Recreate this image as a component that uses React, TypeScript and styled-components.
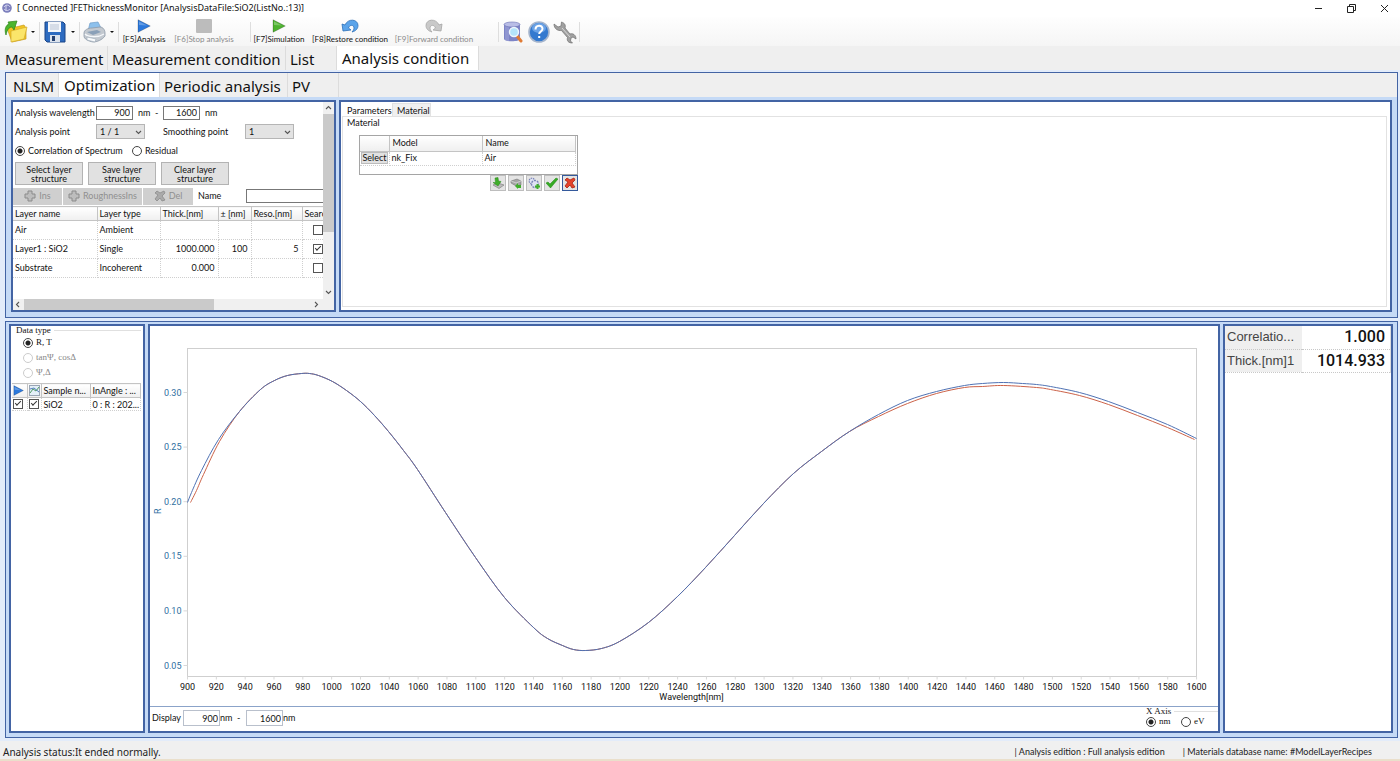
import React from 'react';
import styled, { createGlobalStyle, css } from 'styled-components';

const gothic = '"Lato", "Noto Sans CJK JP", sans-serif';
const wideGothic = '"Noto Sans", "Noto Sans CJK JP", sans-serif';
const mincho = '"Liberation Serif", "Noto Sans CJK JP", serif';
const chartFont = '"Roboto", sans-serif';

const edge = '#4364a4';
const band = '#c5daf6';

const GlobalStyle = createGlobalStyle`
  *, *::before, *::after { box-sizing: border-box; }
  body { margin: 0; background: #e3ecfa; color: #111; font: 9px/12px ${gothic}; }
  button, input, select { font: inherit; color: inherit; margin: 0; border-radius: 0; }
  table { border-collapse: collapse; table-layout: fixed; }
  fieldset { border: 0; margin: 0; padding: 0; min-width: 0; }
  legend { padding: 0; }
`;

const Window = styled.div`
  display: flex;
  flex-direction: column;
  min-height: 100vh;
`;

/* Title bar */
const TitleBar = styled.header`
  display: flex;
  align-items: center;
  height: 17px;
  padding: 0 10px 1px 2px;
  background: #fff;
`;
const Title = styled.h1`
  margin: 0 auto 0 5px;
  font: 400 9px/16px "Noto Sans", sans-serif;
  color: #111;
`;
const WindowButtons = styled.div`
  display: flex;
  gap: 22px;
`;
const WindowButton = styled.button`
  display: flex;
  width: 11px;
  height: 11px;
  padding: 0;
  border: 0;
  background: none;
`;

/* Tool bar */
const ToolBar = styled.div`
  display: flex;
  align-items: center;
  height: 29px;
  padding-left: 4px;
  background: linear-gradient(#fefefe, #f5f5f5);
`;
const IconButton = styled.button`
  display: flex;
  align-items: center;
  justify-content: center;
  width: 26px;
  height: 26px;
  padding: 0;
  border: 0;
  background: none;
`;
const DropButton = styled.button`
  display: flex;
  align-items: center;
  width: 35px;
  height: 26px;
  padding: 0;
  border: 0;
  background: none;
  svg { flex: none; }
`;
const Caret = styled.span`
  flex: none;
  margin: 0 4px 0 auto;
  border: 2px solid transparent;
  border-top-color: #111;
  border-bottom: 0;
`;
const Divider = styled.span<{ $before?: number; $after?: number }>`
  width: 1px;
  height: 20px;
  margin: 0 ${p => p.$after ?? 0}px 0 ${p => p.$before ?? 0}px;
  background: #dedede;
`;
const ActionButton = styled.button<{ $width: number }>`
  display: flex;
  flex-direction: column;
  align-items: center;
  gap: 1px;
  width: ${p => p.$width}px;
  height: 27px;
  padding: 1px 0 0;
  border: 0;
  background: none;
  white-space: nowrap;
  font: 8px/10px ${gothic};
  color: #111;
  &:disabled { color: #8a8a8a; }
`;

/* Tabs */
const TabRow = styled.nav<{ $inset?: boolean }>`
  display: flex;
  height: 24px;
  padding-left: ${p => (p.$inset ? 3 : 1)}px;
  background: #efefef;
`;
const Tab = styled.button<{ $width: number }>`
  width: ${p => p.$width}px;
  padding: 1px 0 0 4px;
  border: 0;
  border-right: 1px solid #dcdcdc;
  background: #efefef;
  text-align: left;
  white-space: nowrap;
  font: 15px/20px ${wideGothic};
  &[aria-selected='true'] {
    padding: 0 0 1px 5px;
    background: #fff;
  }
`;

/* Frames */
const UpperFrame = styled.section`
  margin: 2px 2px 3px 5px;
  border: 1px solid ${edge};
`;
const UpperBody = styled.div`
  display: flex;
  gap: 3px;
  padding: 3px 5px 5px;
  background: ${band};
`;
const LowerFrame = styled.section`
  display: flex;
  flex: 1;
  gap: 3px;
  margin: 0 2px 3px 5px;
  padding: 2px 4px 4px 3px;
  border: 1px solid ${edge};
  background: ${band};
`;
const panel = css`
  border: 2px solid ${edge};
  background: #fff;
`;

/* Layer editor */
const LayerPanel = styled.section`
  ${panel}
  display: grid;
  grid-template-columns: 1fr 11px;
  grid-template-rows: 1fr 11px;
  width: 325px;
  height: 212px;
`;
const LayerContent = styled.div`
  min-width: 0;
  overflow: hidden;
  background: #fff;
`;
const Fields = styled.div`
  display: flex;
  flex-direction: column;
  padding: 1px 0 2px 2px;
`;
const FieldRow = styled.div`
  display: flex;
  align-items: center;
  height: 19px;
`;
const FieldLabel = styled.label<{ $width: number }>`
  width: ${p => p.$width}px;
  white-space: nowrap;
`;
const NumberInput = styled.input`
  width: 37px;
  height: 14px;
  padding: 0 2px;
  border: 1px solid #777;
  background: #fff;
  text-align: right;
`;
const Unit = styled.span<{ $width?: number }>`
  width: ${p => (p.$width ? `${p.$width}px` : 'auto')};
  padding-left: 5px;
  white-space: pre;
`;
const SelectWrap = styled.span<{ $after?: number }>`
  position: relative;
  display: flex;
  width: 49px;
  margin-right: ${p => p.$after ?? 0}px;
  svg { position: absolute; right: 3px; top: 5px; pointer-events: none; }
`;
const Select = styled.select`
  appearance: none;
  width: 100%;
  height: 15px;
  padding: 0 3px;
  border: 1px solid #b5b5b5;
  background: #e3e3e3;
`;
const Choice = styled.label<{ $width?: number; $muted?: boolean }>`
  display: flex;
  align-items: center;
  gap: 3px;
  width: ${p => (p.$width ? `${p.$width}px` : 'auto')};
  white-space: nowrap;
  color: ${p => (p.$muted ? '#888' : 'inherit')};
`;
const Radio = styled.input`
  appearance: none;
  flex: none;
  width: 10px;
  height: 10px;
  border: 1px solid #444;
  border-radius: 50%;
  background: #fff;
  &:checked { background: radial-gradient(circle, #222 0 2px, #fff 3px); }
  &:disabled { border-color: #ccc; }
`;
const Check = styled.input`
  appearance: none;
  display: block;
  flex: none;
  width: 10px;
  height: 10px;
  border: 1px solid #555;
  background: #fff;
  &:checked::after {
    content: '';
    display: block;
    width: 6px;
    height: 3px;
    margin: 1px;
    border: solid #333;
    border-width: 0 0 1px 1px;
    transform: rotate(-45deg);
  }
`;
const StructureButtons = styled.div`
  display: flex;
  gap: 5px;
  padding-top: 2px;
`;
const StructureButton = styled.button`
  width: 68px;
  height: 23px;
  padding: 0;
  border: 1px solid #b3b3b3;
  background: #e1e1e1;
  line-height: 9px;
`;
const EditRow = styled.div`
  display: flex;
  align-items: center;
  gap: 1px;
  height: 19px;
  padding-bottom: 1px;
`;
const EditButton = styled.button<{ $width: number }>`
  display: flex;
  flex: none;
  align-items: center;
  justify-content: center;
  gap: 3px;
  width: ${p => p.$width}px;
  height: 17px;
  padding: 0;
  border: 0;
  background: #cfcfcf;
  &:disabled { color: #8f8f8f; }
`;
const NameLabel = styled.label`
  flex: none;
  width: 51px;
  padding-left: 4px;
`;
const NameInput = styled.input`
  flex: none;
  width: 110px;
  height: 14px;
  border: 1px solid #777;
`;

const cells = css`
  th, td {
    padding: 0 2px;
    font-weight: 400;
    text-align: left;
    white-space: nowrap;
    overflow: hidden;
  }
  th {
    border: solid #c4c4c4;
    border-width: 1px 1px 1px 0;
    background: linear-gradient(#fff, #efefef);
  }
  td {
    border: dotted #cfcfcf;
    border-width: 0 1px 1px 0;
  }
  svg { display: block; }
`;
const LayerTable = styled.table`
  ${cells}
  width: 340px;
  th { height: 14px; padding-left: 2px; }
  td { height: 19px; padding-left: 2px; }
  td:nth-child(n + 3) { text-align: right; padding-right: 3px; }
  td:last-child { padding-left: 10px; }
`;

const VScroll = styled.div`
  display: flex;
  flex-direction: column;
  align-items: center;
  justify-content: space-between;
  padding: 2px 0 3px;
  background: #f0f0f0;
`;
const VThumb = styled.div`
  width: 11px;
  height: 118px;
  margin: 3px 0 auto;
  background: #cacaca;
`;
const HScroll = styled.div`
  display: flex;
  grid-column: 1 / 3;
  align-items: center;
  padding: 0 14px 0 1px;
  background: #f0f0f0;
`;
const HThumb = styled.div`
  width: 190px;
  height: 11px;
  margin: 0 auto 0 3px;
  background: #cacaca;
`;

/* Material editor */
const MaterialPanel = styled.section`
  ${panel}
  flex: 1;
  min-width: 0;
  padding: 1px 3px 3px 1px;
  display: flex;
  flex-direction: column;
`;
const SmallTabs = styled.div`
  display: flex;
  height: 13px;
`;
const SmallTab = styled.button<{ $width: number }>`
  width: ${p => p.$width}px;
  padding: 0 0 0 4px;
  border: 1px solid #e2e2e2;
  border-bottom: 0;
  background: #f0f0f0;
  text-align: left;
  line-height: 11px;
  &[aria-selected='true'] { background: #fff; border-color: #fff; }
`;
const MaterialBody = styled.div`
  flex: 1;
  padding: 0 0 0 4px;
  border: 1px solid #e2e2e2;
`;
const MaterialGrid = styled.div`
  width: 219px;
  height: 40px;
  margin: 6px 0 0 12px;
  border: 1px solid #a5a5a5;
`;
const MaterialTable = styled.table`
  ${cells}
  width: 216px;
  th { height: 15px; padding-left: 3px; border-top: 0; }
  td { height: 14px; }
  td:first-child { padding: 0 1px; }
`;
const SelectButton = styled.button`
  display: block;
  width: 27px;
  height: 12px;
  padding: 0;
  border: 1px solid #bbb;
  background: #e1e1e1;
  line-height: 10px;
`;
const MaterialActions = styled.div`
  display: flex;
  justify-content: flex-end;
  gap: 2px;
  width: 231px;
`;
const SmallButton = styled.button<{ $focus?: boolean }>`
  display: flex;
  width: 16px;
  height: 16px;
  padding: 1px;
  border: 1px solid ${p => (p.$focus ? '#34599c' : '#bdbdbd')};
  background: #e4e4e4;
`;

/* Data selection */
const DataPanel = styled.section`
  ${panel}
  width: 136px;
  padding: 0 2px 2px 1px;
`;
const Group = styled.fieldset`
  font: 9px/11px ${mincho};
`;
const GroupTitle = styled.legend`
  display: flex;
  align-items: center;
  width: 100%;
  height: 8px;
  padding-left: 4px;
  gap: 3px;
  &::after { content: ''; flex: 1; height: 1px; background: #e0e0e0; }
`;
const RadioList = styled.div`
  display: flex;
  flex-direction: column;
  gap: 4px;
  padding: 3px 0 5px 11px;
`;
const SampleTable = styled.table`
  ${cells}
  width: 129px;
  th { height: 14px; }
  td { height: 13px; line-height: 11px; }
  th:nth-child(-n + 2), td:nth-child(-n + 2) { padding: 0 1px; }
`;

/* Spectrum */
const SpectrumPanel = styled.section`
  ${panel}
  display: flex;
  flex: 1;
  flex-direction: column;
  min-width: 0;
`;
const Plot = styled.svg`
  display: block;
  width: 100%;
  height: auto;
  text { font: 9px ${chartFont}; fill: #111; text-anchor: middle; }
  .value { fill: #2f6f9f; text-anchor: end; }
`;
const PlotFooter = styled.div`
  display: flex;
  flex: 1;
  align-items: flex-start;
  min-height: 25px;
  border-top: 1px solid #8ba3c9;
`;
const DisplayRange = styled.div`
  display: flex;
  align-items: center;
  margin-right: auto;
  padding: 3px 0 0 2px;
`;
const RangeInput = styled.input`
  width: 37px;
  height: 16px;
  padding: 0 1px;
  border: 1px solid #b9c0cc;
  text-align: right;
`;
const AxisGroup = styled(Group)`
  width: 72px;
  legend { padding-left: 0; }
`;
const AxisChoices = styled.div`
  display: flex;
  padding-top: 1px;
`;

/* Results */
const ResultPanel = styled.section`
  ${panel}
  width: 170px;
`;
const ResultTable = styled.table`
  width: 166px;
  font-family: "Liberation Sans", sans-serif;
  th, td { height: 23px; border-bottom: 1px dotted #c8c8c8; white-space: nowrap; }
  th { width: 77px; padding: 0 0 0 2px; background: #efefef; text-align: left; font-weight: 400; font-size: 13px; color: #444; }
  td { padding: 0 5px 0 3px; text-align: right; font: 500 16px/20px Roboto, sans-serif; border-right: 1px solid #ddd; }
`;

/* Status bar */
const StatusBar = styled.footer`
  display: flex;
  align-items: center;
  height: 20px;
  padding: 3px 28px 0 3px;
  border-bottom: 2px solid #eadfcb;
  background: #f0f0f0;
  color: #222;
`;
const StatusText = styled.span`
  margin-right: auto;
  font: 10px/16px "Noto Sans", sans-serif;
`;
const StatusItem = styled.span`
  margin-left: 18px;
`;

const Chevron = ({ d }: { d: string }) => (
  <svg width="7" height="7" viewBox="0 0 7 7" fill="none" stroke="#555" strokeWidth="1.1">
    <path d={d} />
  </svg>
);
const DOWN = 'M1 2l2.5 2.5L6 2';

const AppIcon = () => (
  <svg width="10" height="12" viewBox="0 0 10 12">
    <circle cx="5" cy="6" r="4.8" fill="#7d80bd" />
    <path d="M2 5c2-3 5-2 6 0M2 7c2 2 4 2 6 0M4 3v6" stroke="#d5d5f0" fill="none" />
  </svg>
);
const FolderIcon = () => (
  <svg width="25" height="24" viewBox="0 0 25 24">
    <path d="M3 8l7-3 2 2 8-2 2 3v11L8 22z" fill="#f2c522" stroke="#c59a1c" strokeWidth=".7" />
    <path d="M7 11l16-4-3 12L7 22z" fill="#fbe56a" stroke="#d6ab26" strokeWidth=".7" />
    <path d="M2 15C0 9 2 5 5 4L4 2l9-1-3 9-2-3c-3 0-5 3-6 8z" fill="#4cb52e" stroke="#2c8418" strokeWidth=".7" />
  </svg>
);
const SaveIcon = () => (
  <svg width="22" height="22" viewBox="0 0 22 22">
    <path d="M1 1h18l2 2v18H3l-2-2z" fill="#2d6bc0" stroke="#1b4586" />
    <path d="M4 1h13v10H4z" fill="#f4f6fa" />
    <path d="M6 4h9M6 6h9M6 8h9" stroke="#b8c3d5" />
    <path d="M6 14h10v7H6z" fill="#dbe2ec" />
    <path d="M8 15h3v5H8z" fill="#25406f" />
  </svg>
);
const PrinterIcon = () => (
  <svg width="23" height="22" viewBox="0 0 23 22">
    <path d="M5 10l2-8 8-1 4 8z" fill="#8cc0ec" stroke="#6f9cc8" strokeWidth=".7" />
    <path d="M1 12c0-3 4-5 8-5l8-1c3 0 5 3 5 6v3c-3 4-8 6-12 6-5-1-9-3-9-6z" fill="#c3c9d0" stroke="#8d99a8" strokeWidth=".8" />
    <path d="M4 11l10-2 4 2-8 3z" fill="#8aa0b8" />
    <path d="M2 13c3 3 13 4 19 0" fill="none" stroke="#f5f8fb" strokeWidth="1.4" />
    <path d="M4 16l9 2-1 3-8-2z" fill="#f8fafc" stroke="#9aa7b5" strokeWidth=".6" />
  </svg>
);
const PlayIcon = ({ fill, size = 14 }: { fill: string; size?: number }) => (
  <svg width={size} height={size} viewBox="0 0 14 14">
    <path d="M1 .7L13.3 7 1 13.3z" fill={fill} stroke="#0003" />
    <path d="M2 2.5L10 6.6 2 6z" fill="#fff4" />
  </svg>
);
const StopIcon = () => (
  <svg width="16" height="14" viewBox="0 0 16 14">
    <rect width="16" height="14" rx="1" fill="#bcbcbc" />
  </svg>
);
const TurnIcon = ({ fill, line, flip }: { fill: string; line: string; flip?: boolean }) => (
  <svg width="18" height="14" viewBox="0 0 18 14">
    <path
      transform={flip ? 'translate(18 0) scale(-1 1)' : undefined}
      d="M1 5l1 7 8-1-2.500-2C9 5 13 6 13 9c0 1-.5 2.500-2 4 4-1 6-3.500 6-6.500C17 0 7-1 4 6z"
      fill={fill}
      stroke={line}
      strokeWidth=".8"
    />
  </svg>
);
const DatabaseIcon = () => (
  <svg width="20" height="22" viewBox="0 0 20 22">
    <path d="M1 3v15c0 3 16 3 16 0V3z" fill="#7d84c6" />
    <path d="M3 5v14M5 5v15" stroke="#a3a8dc" />
    <ellipse cx="9" cy="3.500" rx="8" ry="2.500" fill="#b9bde6" stroke="#6a70b4" strokeWidth=".6" />
    <path d="M14 15l4 5" stroke="#e07b34" strokeWidth="3" strokeLinecap="round" />
    <circle cx="11" cy="11" r="4.500" fill="#b4e4fa" stroke="#eef6fd" strokeWidth="1.4" />
  </svg>
);
const HelpIcon = () => (
  <svg width="22" height="22" viewBox="0 0 22 22">
    <circle cx="11" cy="11" r="10" fill="#3479cf" stroke="#a4b4cc" strokeWidth="1.6" />
    <ellipse cx="11" cy="7" rx="7" ry="5" fill="#6aa2e6" />
    <path d="M7.500 8.500c0-5 7-5 7-.7 0 2.700-3.300 2.700-3.300 5.200M11.200 15v2" fill="none" stroke="#fff" strokeWidth="2" />
  </svg>
);
const WrenchIcon = () => (
  <svg width="24" height="24" viewBox="0 0 24 24">
    <path
      d="M1 4l4 3 3-1 .5-4c3 1 4.500 3 3.500 6l5 6c3-1 6 1 6 5l-3-2-2 1-.5 3 2 2c-4 0-6-2-5-5.500l-6-7C5 11 1 9 1 4z"
      fill="#a0a0a0"
      stroke="#6f6f6f"
      strokeWidth=".7"
    />
    <path d="M9 8l8 9" stroke="#d8d8d8" />
  </svg>
);
const PlusIcon = () => (
  <svg width="12" height="12" viewBox="0 0 12 12">
    <path d="M4 1h4v3h3v4H8v3H4V8H1V4h3z" fill="#bdbdbd" stroke="#8b8b8b" />
  </svg>
);
const DeleteIcon = ({ fill, line }: { fill: string; line: string }) => (
  <svg width="12" height="12" viewBox="0 0 12 12">
    <path d="M1 3l2-2 3 2 4-2 1 2-3 3 3 4-3 1-2-3-3 3-2-2 3-4z" fill={fill} stroke={line} strokeWidth=".8" />
  </svg>
);
const ImportIcon = () => (
  <svg width="12" height="12" viewBox="0 0 12 12">
    <path d="M1 8l5-2 6 2-5 3.500z" fill="#bbb" stroke="#777" strokeWidth=".6" />
    <path d="M3 1l3-.5.5 3.500 2.500.5L6 9 1 5.500h2.500z" fill="#3fae2a" stroke="#2b841a" strokeWidth=".5" />
  </svg>
);
const ExportIcon = () => (
  <svg width="12" height="12" viewBox="0 0 12 12">
    <path d="M1 4l6-2 4 2v4L6 9 1 6z" fill="#a5a5a5" stroke="#6f6f6f" strokeWidth=".5" />
    <path d="M1 4l5 2 5-2" fill="none" stroke="#e0e0e0" strokeWidth=".7" />
    <path d="M5 9l3-3v2h3v3H8v1z" fill="#3fae2a" />
  </svg>
);
const CopyIcon = () => (
  <svg width="12" height="12" viewBox="0 0 12 12">
    <circle cx="4" cy="4" r="2.800" fill="#dfe3f3" stroke="#7a84b8" strokeWidth="1.200" strokeDasharray="1.500 .8" />
    <circle cx="7" cy="7" r="3.500" fill="#dfe3f3" stroke="#7a84b8" strokeWidth="1.400" strokeDasharray="2 1" />
    <path d="M7 9.500h5M9.500 7v5" stroke="#3fae2a" strokeWidth="2" />
  </svg>
);
const CheckIcon = () => (
  <svg width="12" height="12" viewBox="0 0 12 12">
    <path d="M0 6l2-1 2 2 6-6 2 1-7.500 9z" fill="#35ab24" stroke="#1f8413" strokeWidth=".5" />
  </svg>
);
const GraphIcon = () => (
  <svg width="11" height="11" viewBox="0 0 11 11">
    <rect x=".5" y=".5" width="10" height="10" fill="#e4eff8" stroke="#9aa6b5" />
    <path d="M1 8l3-4 3 2 3-4" fill="none" stroke="#4f9a62" />
    <path d="M1 4l4-1 5 4" fill="none" stroke="#5680bd" />
  </svg>
);

type Point = [number, number];

/* Curve samples in plot units: x from the left edge, y from the top edge. */
const rising: Point[] = [
  [31, 92], [52, 63], [73, 41], [87, 32], [100, 27], [114, 25], [122, 25], [131, 27], [145, 33], [159, 42],
  [173, 53], [187, 67], [201, 83], [216, 102], [230, 121], [258, 164], [288, 209], [317, 249], [346, 279],
  [360, 290], [375, 297], [386, 301], [398, 302], [414, 300], [432, 293], [461, 274], [490, 248], [518, 219],
  [547, 187], [576, 155], [606, 125], [634, 103], [662, 83],
];
const measured: Point[] = [
  [0, 154], [4, 144], [14, 122], [31, 91], ...rising.slice(1), [691, 66], [720, 52], [749, 43], [777, 37],
  [795, 35], [816, 34], [835, 35], [849, 36], [863, 38], [892, 44], [921, 53], [950, 64],
  [980, 76], [1009, 90],
];
const simulated: Point[] = [
  [3, 154], [9, 142], [16, 126], [32, 93], ...rising.slice(1), [691, 68], [720, 55], [749, 45], [777, 39],
  [795, 38], [816, 37], [849, 39], [863, 41], [892, 47], [921, 56], [950, 67], [980, 79], [1007, 91],
];
const curve = (pts: Point[]) =>
  pts.reduce((d, p, i) => {
    if (i === 0) return `M${p[0]} ${p[1]}`;
    const a = pts[i - 1];
    const before = pts[i - 2] ?? a;
    const after = pts[i + 1] ?? p;
    const c1 = [a[0] + (p[0] - before[0]) / 6, a[1] + (p[1] - before[1]) / 6];
    const c2 = [p[0] - (after[0] - a[0]) / 6, p[1] - (after[1] - a[1]) / 6];
    return `${d}C${c1[0]} ${c1[1]} ${c2[0]} ${c2[1]} ${p[0]} ${p[1]}`;
  }, '');

const wavelengths = Array.from({ length: 36 }, (_, i) => 900 + i * 20);
const ratios = ['0.30', '0.25', '0.20', '0.15', '0.10', '0.05'];

const Spectrum = () => (
  <Plot viewBox="0 0 1068 380" role="img" aria-label="R against wavelength">
    <g transform="translate(37.5 22.5)">
      <rect width="1009" height="328" fill="#fff" stroke="#cfcfcf" />
      {ratios.map((r, i) => (
        <g key={r}>
          <path d={`M-4 ${44 + i * 54.6}h4`} stroke="#d8d8d8" />
          <text className="value" x="-6" y={47 + i * 54.6}>{r}</text>
        </g>
      ))}
      {wavelengths.map((w, i) => (
        <g key={w}>
          <path d={`M${i * 28.83} 328v3`} stroke="#d8d8d8" />
          <text x={i * 28.83} y="341">{w}</text>
        </g>
      ))}
      <text x="504" y="351">Wavelength[nm]</text>
      <text className="value" transform="translate(-27 160) rotate(-90)">R</text>
      <path d={curve(simulated)} fill="none" stroke="#cc6248" />
      <path d={curve(measured)} fill="none" stroke="#4f72b4" />
    </g>
  </Plot>
);

const mainTabs = [
  { name: 'Measurement', width: 107 },
  { name: 'Measurement condition', width: 178 },
  { name: 'List', width: 51 },
  { name: 'Analysis condition', width: 142, active: true },
];
const methodTabs = [
  { name: 'NLSM', width: 50 },
  { name: 'Optimization', width: 101, active: true },
  { name: 'Periodic analysis', width: 128 },
  { name: 'PV', width: 51 },
];
const layers = [
  { name: 'Air', type: 'Ambient', thick: '', range: '', reso: '', search: false },
  { name: 'Layer1 : SiO2', type: 'Single', thick: '1000.000', range: '100', reso: '5', search: true },
  { name: 'Substrate', type: 'Incoherent', thick: '0.000', range: '', reso: '', search: false },
];

export default function App() {
  return (
    <>
      <GlobalStyle />
      <Window>
        <TitleBar>
          <AppIcon />
          <Title>[ Connected ]FEThicknessMonitor [AnalysisDataFile:SiO2(ListNo.:13)]</Title>
          <WindowButtons>
            <WindowButton aria-label="Minimize">
              <svg width="11" height="11"><path d="M2 5.500h7" stroke="#222" /></svg>
            </WindowButton>
            <WindowButton aria-label="Restore">
              <svg width="11" height="11" fill="none" stroke="#222"><path d="M1.500 3.500h6v6h-6zM3.500 3.500v-2h6v6h-2" /></svg>
            </WindowButton>
            <WindowButton aria-label="Close">
              <svg width="11" height="11" stroke="#222"><path d="M2 2l7 7M9 2L2 9" /></svg>
            </WindowButton>
          </WindowButtons>
        </TitleBar>

        <ToolBar>
          <DropButton aria-label="Open"><FolderIcon /><Caret /></DropButton>
          <Divider $after={4} />
          <DropButton aria-label="Save"><SaveIcon /><Caret /></DropButton>
          <Divider $after={3} />
          <DropButton aria-label="Print"><PrinterIcon /><Caret /></DropButton>
          <Divider />
          <ActionButton $width={50}><PlayIcon fill="#2b78dc" />[F5]Analysis</ActionButton>
          <ActionButton $width={70} disabled><StopIcon />[F6]Stop analysis</ActionButton>
          <Divider $before={11} />
          <ActionButton $width={56}><PlayIcon fill="#4cb22e" />[F7]Simulation</ActionButton>
          <ActionButton $width={86}><TurnIcon fill="#5ba4ea" line="#2c6fb8" />[F8]Restore condition</ActionButton>
          <ActionButton $width={82} disabled><TurnIcon fill="#c9c9c9" line="#a5a5a5" flip />[F9]Forward condition</ActionButton>
          <Divider $before={23} $after={1} />
          <IconButton aria-label="Material database"><DatabaseIcon /></IconButton>
          <IconButton aria-label="Help"><HelpIcon /></IconButton>
          <IconButton aria-label="Settings"><WrenchIcon /></IconButton>
          <Divider $before={1} />
        </ToolBar>

        <TabRow role="tablist">
          {mainTabs.map(t => (
            <Tab key={t.name} role="tab" $width={t.width} aria-selected={!!t.active}>{t.name}</Tab>
          ))}
        </TabRow>

        <UpperFrame>
          <TabRow role="tablist" $inset>
            {methodTabs.map(t => (
              <Tab key={t.name} role="tab" $width={t.width} aria-selected={!!t.active}>{t.name}</Tab>
            ))}
          </TabRow>
          <UpperBody>
            <LayerPanel>
              <LayerContent>
                <Fields>
                  <FieldRow>
                    <FieldLabel htmlFor="from" $width={81}>Analysis wavelength</FieldLabel>
                    <NumberInput id="from" defaultValue="900" />
                    <Unit $width={30}>nm  -</Unit>
                    <NumberInput aria-label="Analysis wavelength end" defaultValue="1600" />
                    <Unit>nm</Unit>
                  </FieldRow>
                  <FieldRow>
                    <FieldLabel htmlFor="point" $width={81}>Analysis point</FieldLabel>
                    <SelectWrap $after={18}>
                      <Select id="point"><option>1 / 1</option></Select>
                      <Chevron d={DOWN} />
                    </SelectWrap>
                    <FieldLabel htmlFor="smooth" $width={82}>Smoothing point</FieldLabel>
                    <SelectWrap>
                      <Select id="smooth"><option>1</option></Select>
                      <Chevron d={DOWN} />
                    </SelectWrap>
                  </FieldRow>
                  <FieldRow>
                    <Choice $width={117}><Radio type="radio" name="method" defaultChecked />Correlation of Spectrum</Choice>
                    <Choice><Radio type="radio" name="method" />Residual</Choice>
                  </FieldRow>
                  <StructureButtons>
                    <StructureButton>Select layer<br />structure</StructureButton>
                    <StructureButton>Save layer<br />structure</StructureButton>
                    <StructureButton>Clear layer<br />structure</StructureButton>
                  </StructureButtons>
                </Fields>
                <EditRow>
                  <EditButton $width={49} disabled><PlusIcon />Ins</EditButton>
                  <EditButton $width={79} disabled><PlusIcon />RoughnessIns</EditButton>
                  <EditButton $width={50} disabled><DeleteIcon fill="#aaa" line="#8b8b8b" />Del</EditButton>
                  <NameLabel htmlFor="name">Name</NameLabel>
                  <NameInput id="name" />
                </EditRow>
                <LayerTable>
                  <colgroup>
                    <col width="84" /><col width="63" /><col width="58" /><col width="33" /><col width="51" /><col />
                  </colgroup>
                  <thead>
                    <tr><th>Layer name</th><th>Layer type</th><th>Thick.[nm]</th><th>± [nm]</th><th>Reso.[nm]</th><th>Search</th></tr>
                  </thead>
                  <tbody>
                    {layers.map(l => (
                      <tr key={l.name}>
                        <td>{l.name}</td><td>{l.type}</td><td>{l.thick}</td><td>{l.range}</td><td>{l.reso}</td>
                        <td><Check type="checkbox" aria-label={`Search ${l.name}`} defaultChecked={l.search} /></td>
                      </tr>
                    ))}
                  </tbody>
                </LayerTable>
              </LayerContent>
              <VScroll>
                <Chevron d="M1 5l2.500-2.500L6 5" />
                <VThumb />
                <Chevron d={DOWN} />
              </VScroll>
              <HScroll>
                <Chevron d="M5 1L2.500 3.500 5 6" />
                <HThumb />
                <Chevron d="M2 1l2.500 2.500L2 6" />
              </HScroll>
            </LayerPanel>

            <MaterialPanel>
              <SmallTabs role="tablist">
                <SmallTab role="tab" aria-selected $width={50}>Parameters</SmallTab>
                <SmallTab role="tab" aria-selected={false} $width={39}>Material</SmallTab>
              </SmallTabs>
              <MaterialBody>
                Material
                <MaterialGrid>
                  <MaterialTable>
                    <colgroup><col width="29" /><col width="93" /><col /></colgroup>
                    <thead><tr><th aria-label="Select" /><th>Model</th><th>Name</th></tr></thead>
                    <tbody><tr><td><SelectButton>Select</SelectButton></td><td>nk_Fix</td><td>Air</td></tr></tbody>
                  </MaterialTable>
                </MaterialGrid>
                <MaterialActions>
                  <SmallButton aria-label="Import"><ImportIcon /></SmallButton>
                  <SmallButton aria-label="Export"><ExportIcon /></SmallButton>
                  <SmallButton aria-label="Add"><CopyIcon /></SmallButton>
                  <SmallButton aria-label="Apply"><CheckIcon /></SmallButton>
                  <SmallButton aria-label="Cancel" $focus><DeleteIcon fill="#e5432c" line="#a8230f" /></SmallButton>
                </MaterialActions>
              </MaterialBody>
            </MaterialPanel>
          </UpperBody>
        </UpperFrame>

        <LowerFrame>
          <DataPanel>
            <Group>
              <GroupTitle>Data type</GroupTitle>
              <RadioList>
                <Choice><Radio type="radio" name="data" defaultChecked />R, T</Choice>
                <Choice $muted><Radio type="radio" name="data" disabled />tanΨ, cosΔ</Choice>
                <Choice $muted><Radio type="radio" name="data" disabled />Ψ,Δ</Choice>
              </RadioList>
            </Group>
            <SampleTable>
              <colgroup><col width="15" /><col width="14" /><col width="49" /><col /></colgroup>
              <thead>
                <tr>
                  <th aria-label="Run"><PlayIcon fill="#2b78dc" size={11} /></th>
                  <th aria-label="Plot"><GraphIcon /></th>
                  <th>Sample n...</th>
                  <th>InAngle : ...</th>
                </tr>
              </thead>
              <tbody>
                <tr>
                  <td><Check type="checkbox" aria-label="Run SiO2" defaultChecked /></td>
                  <td><Check type="checkbox" aria-label="Plot SiO2" defaultChecked /></td>
                  <td>SiO2</td>
                  <td>0 : R : 202...</td>
                </tr>
              </tbody>
            </SampleTable>
          </DataPanel>

          <SpectrumPanel>
            <Spectrum />
            <PlotFooter>
              <DisplayRange>
                <FieldLabel htmlFor="low" $width={31}>Display</FieldLabel>
                <RangeInput id="low" defaultValue="900" />
                <FieldLabel as="span" $width={26}>nm&nbsp; -</FieldLabel>
                <RangeInput aria-label="Display end" defaultValue="1600" />
                <span>nm</span>
              </DisplayRange>
              <AxisGroup>
                <GroupTitle>X Axis</GroupTitle>
                <AxisChoices>
                  <Choice $width={35}><Radio type="radio" name="axis" defaultChecked />nm</Choice>
                  <Choice><Radio type="radio" name="axis" />eV</Choice>
                </AxisChoices>
              </AxisGroup>
            </PlotFooter>
          </SpectrumPanel>

          <ResultPanel>
            <ResultTable>
              <tbody>
                <tr><th scope="row">Correlatio...</th><td>1.000</td></tr>
                <tr><th scope="row">Thick.[nm]1</th><td>1014.933</td></tr>
              </tbody>
            </ResultTable>
          </ResultPanel>
        </LowerFrame>

        <StatusBar>
          <StatusText>Analysis status:It ended normally.</StatusText>
          <StatusItem>| Analysis edition : Full analysis edition</StatusItem>
          <StatusItem>| Materials database name: #ModelLayerRecipes</StatusItem>
        </StatusBar>
      </Window>
    </>
  );
}
